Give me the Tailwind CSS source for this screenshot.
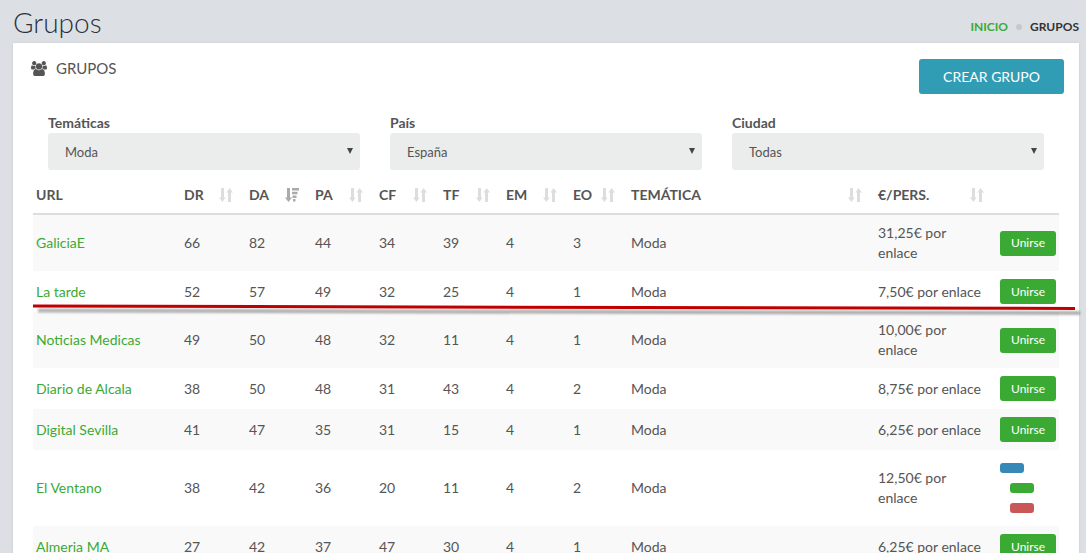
<!DOCTYPE html>
<html lang="es">
<head>
    <meta charset="UTF-8">
    <meta name="viewport" content="width=device-width, initial-scale=1.0">
    <title>Grupos</title>
    <script src="https://cdn.jsdelivr.net/npm/@tailwindcss/browser@4"></script>
</head>
<body class="bg-[#dce0e4] font-[Lato,sans-serif] text-sm leading-5 text-[#555] h-screen overflow-hidden">
    <!-- Iconos -->
    <svg class="hidden">
        <symbol id="sort" viewBox="0 0 14 14">
            <path d="M2 0h3v9.500h1.500L3.500 14 0 9.500h2zM9 14h3V4.500h2L10.500 0 7.500 4.500H9z"/>
        </symbol>
        <symbol id="sort-desc" viewBox="0 0 14 14">
            <path d="M2 0h3v9.500h2L3.500 14 0 9.500h2zM7 0h7v2.500H7zM7 3.700h5.500v2.500H7zM7.500 7.400h4v2.500h-4zM8 11.100h2.500v2.500H8z"/>
        </symbol>
    </svg>

    <header class="flex justify-between pl-[13px] pr-[7px] h-[43px]">
        <h1 class="text-[28px] leading-[44px] font-light text-[#2b3040]">Grupos</h1>
        <nav class="flex items-center gap-2 pt-[10px] text-xs font-bold">
            <a href="#" class="text-[#3aaa35]">INICIO</a>
            <span class="size-[6px] rounded-full bg-[#c5c8cc]"></span>
            <span class="text-[#333]">GRUPOS</span>
        </nav>
    </header>

    <main class="relative bg-white ml-[13px] mr-[7px] pl-5 pr-5 h-full shadow-[0_0_3px_rgba(0,0,0,0.08)]">
        <div class="flex justify-between pt-4 -mr-[5px]">
            <h2 class="flex items-center h-[18px] gap-[9px] text-[15px] text-[#555]">
                <svg class="w-4 h-[15px] -ml-0.5 fill-[#555]" viewBox="0 0 1920 1792"><path d="M593 896q-162 5-265 128h-134q-82 0-138-40.500t-56-118.500q0-353 124-353 6 0 43.500 21t97.500 42.500 119 21.500q67 0 133-23-5 37-5 66 0 139 81 256zm1071 637q0 120-73 189.500t-194 69.500h-874q-121 0-194-69.500t-73-189.500q0-53 3.500-103.500t14-109 26.500-108.500 43-97.500 62-81 85.500-53.500 111.500-20q10 0 43 21.500t73 48 107 48 135 21.500 135-21.500 107-48 73-48 43-21.500q61 0 111.500 20t85.500 53.500 62 81 43 97.500 26.500 108.500 14 109 3.500 103.500zm-1024-1277q0 106-75 181t-181 75-181-75-75-181 75-181 181-75 181 75 75 181zm704 384q0 159-112.500 271.500t-271.500 112.500-271.500-112.500-112.500-271.500 112.500-271.500 271.500-112.500 271.500 112.500 112.500 271.500zm576 225q0 78-56 118.500t-138 40.500h-134q-103-123-265-128 81-117 81-256 0-29-5-66 66 23 133 23 59 0 119-21.500t97.500-42.500 43.500-21q124 0 124 353zm-128-609q0 106-75 181t-181 75-181-75-75-181 75-181 181-75 181 75 75 181z"/></svg>
                GRUPOS
            </h2>
            <button class="bg-[#319db5] text-white rounded-[3px] px-6 h-[35px]">CREAR GRUPO</button>
        </div>

        <!-- Filtros -->
        <form class="grid grid-cols-3 gap-[30px] px-[15px] pt-[19px]">
            <div>
                <label for="tematica" class="block font-bold">Temáticas</label>
                <div class="relative">
                    <select id="tematica" class="appearance-none w-full h-[37px] rounded-[3px] bg-[#ebecec] px-[17px] text-[13px]"><option>Moda</option></select>
                    <svg class="absolute right-[7px] top-[15px] w-[6px] h-[6px] fill-[#444] pointer-events-none" viewBox="0 0 6 6"><path d="M0 0h6L3 6z"/></svg>
                </div>
            </div>
            <div>
                <label for="pais" class="block font-bold">País</label>
                <div class="relative">
                    <select id="pais" class="appearance-none w-full h-[37px] rounded-[3px] bg-[#ebecec] px-[17px] text-[13px]"><option>España</option></select>
                    <svg class="absolute right-[7px] top-[15px] w-[6px] h-[6px] fill-[#444] pointer-events-none" viewBox="0 0 6 6"><path d="M0 0h6L3 6z"/></svg>
                </div>
            </div>
            <div>
                <label for="ciudad" class="block font-bold">Ciudad</label>
                <div class="relative">
                    <select id="ciudad" class="appearance-none w-full h-[37px] rounded-[3px] bg-[#ebecec] px-[17px] text-[13px]"><option>Todas</option></select>
                    <svg class="absolute right-[7px] top-[15px] w-[6px] h-[6px] fill-[#444] pointer-events-none" viewBox="0 0 6 6"><path d="M0 0h6L3 6z"/></svg>
                </div>
            </div>
        </form>

        <!-- Tabla de grupos -->
        <table class="table-fixed border-separate border-spacing-0 w-full mt-[7px]">
            <colgroup>
                <col class="w-[148px]">
                <col class="w-[65px]">
                <col class="w-[66px]">
                <col class="w-[64px]">
                <col class="w-[64px]">
                <col class="w-[63px]">
                <col class="w-[67px]">
                <col class="w-[58px]">
                <col>
                <col class="w-[122px]">
                <col class="w-[62px]">
            </colgroup>
            <thead>
                <tr id="cabecera"></tr>
            </thead>
            <tbody id="filas"></tbody>
        </table>

        <!-- Línea que subraya el grupo La tarde -->
        <svg class="absolute left-5 top-[258px] w-[calc(100%-16px)] h-4 overflow-visible pointer-events-none" viewBox="0 0 1050 16" preserveAspectRatio="none">
            <path class="blur-[1px]" d="M5 9.500L1047 12" stroke="#000" stroke-opacity="0.3" stroke-width="4"/>
            <path d="M0 5L1042 7.500" stroke="#c00000" stroke-width="3"/>
        </svg>
    </main>

    <script>
        const columnas = ['URL', 'DR', 'DA', 'PA', 'CF', 'TF', 'EM', 'EO', 'TEMÁTICA', '€/PERS.', ''];
        const grupos = [
            ['GaliciaE', 66, 82, 44, 34, 39, 4, 3, 'Moda', '31,25€ por enlace'],
            ['La tarde', 52, 57, 49, 32, 25, 4, 1, 'Moda', '7,50€ por enlace'],
            ['Noticias Medicas', 49, 50, 48, 32, 11, 4, 1, 'Moda', '10,00€ por enlace'],
            ['Diario de Alcala', 38, 50, 48, 31, 43, 4, 2, 'Moda', '8,75€ por enlace'],
            ['Digital Sevilla', 41, 47, 35, 31, 15, 4, 1, 'Moda', '6,25€ por enlace'],
            ['El Ventano', 38, 42, 36, 20, 11, 4, 2, 'Moda', '12,50€ por enlace'],
            ['Almeria MA', 27, 42, 37, 47, 30, 4, 1, 'Moda', '6,25€ por enlace']
        ];

        const unirse = '<button class="block bg-[#3aaa35] text-white text-xs rounded-[3px] px-[11px] h-[25px]">Unirse</button>';
        // Grupo propio: ver, editar y borrar
        const acciones = `
            <div class="flex flex-col gap-[10px] py-[5px]">
                <button aria-label="Ver" class="w-6 h-[10px] rounded-[3px] bg-[#3689b7]"></button>
                <button aria-label="Editar" class="w-6 h-[10px] rounded-[3px] bg-[#3aaa35] ml-[10px]"></button>
                <button aria-label="Borrar" class="w-6 h-[10px] rounded-[3px] bg-[#c95757] ml-[10px]"></button>
            </div>`;

        function icono(nombre) {
            if (nombre === 'URL' || nombre === '') return '';
            return nombre === 'DA'
                ? '<svg class="size-[14px] fill-[#aaa]"><use href="#sort-desc"/></svg>'
                : '<svg class="size-[14px] fill-[#ddd]"><use href="#sort"/></svg>';
        }

        document.getElementById('cabecera').innerHTML = columnas.map(c => `
            <th class="h-[38px] p-0 pl-[3px] border-b-2 border-[#ddd] text-left font-bold">
                <div class="flex items-center justify-between pr-[13px]">${c}${icono(c)}</div>
            </th>`).join('');

        document.getElementById('filas').innerHTML = grupos.map(g => `
            <tr class="odd:bg-[#f9f9f9]">
                <td class="py-2 px-[3px]"><a href="#" class="text-[#3aaa35]">${g[0]}</a></td>
                ${g.slice(1).map(v => `<td class="py-2 pl-[3px] pr-[13px]">${v}</td>`).join('')}
                <td class="py-2 px-[3px]">${g[0] === 'El Ventano' ? acciones : unirse}</td>
            </tr>`).join('');
    </script>
</body>
</html>
